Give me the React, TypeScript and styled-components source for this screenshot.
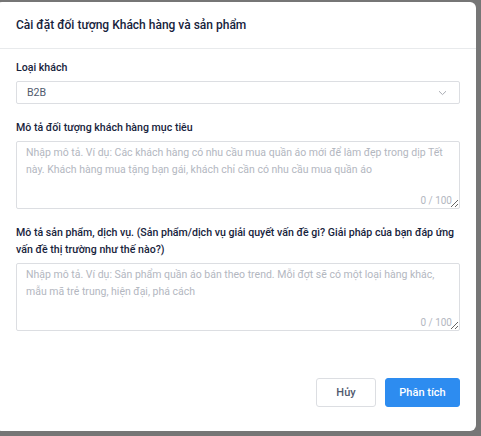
import React from "react";
import styled, { createGlobalStyle } from "styled-components";

const GlobalStyle = createGlobalStyle`
  html, body {
    margin: 0;
    padding: 0;
    background: #767676;
    font-family: Roboto, "Noto Sans", Arial, sans-serif;
    overflow: hidden;
  }
  * { box-sizing: border-box; }
`;

const Backdrop = styled.div`
  width: 481px;
  height: 436px;
  padding: 2px 5px 5px 0;
  display: flex;
`;

const Modal = styled.div`
  flex: 1;
  margin-left: -4px;
  background: #fff;
  border-radius: 6px;
  display: flex;
  flex-direction: column;
  overflow: hidden;
`;

const Header = styled.div`
  height: 47px;
  padding: 0 20px;
  display: flex;
  align-items: center;
  border-bottom: 1px solid #e8eaec;
`;

const Title = styled.h2`
  margin: 0;
  font-size: 12px;
  font-weight: 500;
  color: #17233c;
`;

const Body = styled.div`
  flex: 1;
  padding: 10px 16px 0 20px;
  display: flex;
  flex-direction: column;
  gap: 15px;
`;

const Field = styled.div`
  display: flex;
  flex-direction: column;
  gap: 5px;
`;

const Label = styled.label`
  font-size: 10.6px;
  line-height: 17px;
  font-weight: 500;
  color: #17233c;
`;

const SelectBox = styled.div`
  height: 23px;
  border: 1px solid #dcdee2;
  border-radius: 2px;
  padding: 0 12px 0 10px;
  display: flex;
  align-items: center;
  justify-content: space-between;
  font-size: 10.6px;
  color: #515a6e;
`;

const Chevron = () => (
  <svg width="9" height="6" viewBox="0 0 9 6" fill="none">
    <path d="M1 1.2 L4.5 4.6 L8 1.2" stroke="#a8abb2" strokeWidth="1" />
  </svg>
);

const AreaWrap = styled.div`
  position: relative;
  display: flex;
`;

const TextArea = styled.textarea`
  width: 100%;
  height: 68px;
  resize: vertical;
  border: 1px solid #dcdee2;
  border-radius: 2px;
  padding: 2px 7px 2px 9px;
  font-family: Roboto, "Noto Sans", Arial, sans-serif;
  font-size: 10.5px;
  line-height: 17px;
  color: #515a6e;
  outline: none;
  &::placeholder {
    color: #b3b7bf;
  }
`;

const Counter = styled.span`
  position: absolute;
  right: 8px;
  bottom: 3px;
  font-size: 10px;
  color: #b3b7bf;
  pointer-events: none;
`;

const Footer = styled.div`
  padding: 0 16px 24px;
  display: flex;
  justify-content: flex-end;
  gap: 9px;
`;

const Button = styled.button<{ $primary?: boolean }>`
  height: 29px;
  padding: 0 13px;
  min-width: ${(p) => (p.$primary ? 75 : 60)}px;
  border-radius: 3px;
  font-family: Roboto, "Noto Sans", Arial, sans-serif;
  font-size: 11px;
  font-weight: 500;
  cursor: pointer;
  border: 1px solid ${(p) => (p.$primary ? "#2d8cf0" : "#dcdee2")};
  background: ${(p) => (p.$primary ? "#2d8cf0" : "#fff")};
  color: ${(p) => (p.$primary ? "#fff" : "#515a6e")};
`;

export default function App() {
  return (
    <>
      <GlobalStyle />
      <Backdrop>
        <Modal>
          <Header>
            <Title>Cài đặt đối tượng Khách hàng và sản phẩm</Title>
          </Header>
          <Body>
            <Field>
              <Label>Loại khách</Label>
              <SelectBox>
                <span>B2B</span>
                <Chevron />
              </SelectBox>
            </Field>
            <Field>
              <Label>Mô tả đối tượng khách hàng mục tiêu</Label>
              <AreaWrap>
                <TextArea placeholder="Nhập mô tả. Ví dụ: Các khách hàng có nhu cầu mua quần áo mới để làm đẹp trong dịp Tết này. Khách hàng mua tặng bạn gái, khách chỉ cần có nhu cầu mua quần áo" />
                <Counter>0 / 100</Counter>
              </AreaWrap>
            </Field>
            <Field>
              <Label>
                Mô tả sản phẩm, dịch vụ. (Sản phẩm/dịch vụ giải quyết vấn đề gì? Giải pháp của bạn đáp ứng vấn đề thị trường như thế nào?)
              </Label>
              <AreaWrap>
                <TextArea placeholder="Nhập mô tả. Ví dụ: Sản phẩm quần áo bán theo trend. Mỗi đợt sẽ có một loại hàng khác, mẫu mã trẻ trung, hiện đại, phá cách" />
                <Counter>0 / 100</Counter>
              </AreaWrap>
            </Field>
          </Body>
          <Footer>
            <Button>Hủy</Button>
            <Button $primary>Phân tích</Button>
          </Footer>
        </Modal>
      </Backdrop>
    </>
  );
}
